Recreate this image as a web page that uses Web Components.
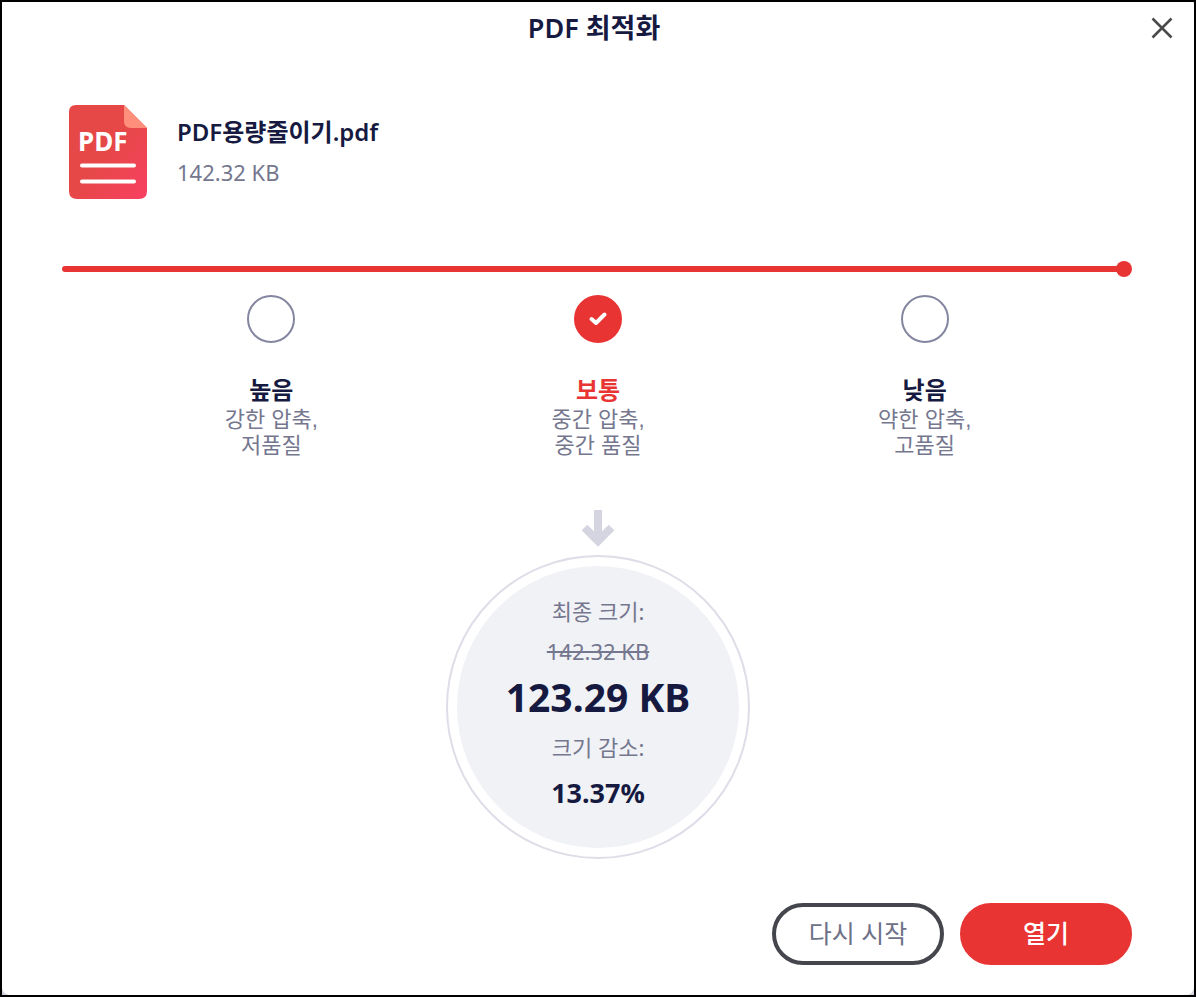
<!DOCTYPE html>
<html lang="ko">
  <head>
    <meta charset="UTF-8" />
    <meta name="viewport" content="width=device-width, initial-scale=1" />
    <title>PDF 최적화</title>
    <style>
      :root {
        --ink: #161a41;
        --muted: #75778f;
        --red: #e93434;
        --line: #dedde8;
      }
      body {
        margin: 0;
        color: var(--ink);
        font-family: "Noto Sans", "Noto Sans CJK KR", sans-serif;
      }
    </style>
  </head>
  <body>
    <optimize-dialog>
      <span slot="title">PDF 최적화</span>
      <file-summary>
        <span slot="name">PDF용량줄이기.pdf</span>
        <span slot="size">142.32 KB</span>
      </file-summary>
      <progress-track value="100"></progress-track>
      <level-picker></level-picker>
      <size-result>
        <span slot="before">142.32 KB</span>
        <span slot="after">123.29 KB</span>
        <span slot="saved">13.37%</span>
      </size-result>
      <pill-button slot="actions">다시 시작</pill-button>
      <pill-button slot="actions" primary>열기</pill-button>
    </optimize-dialog>

    <template id="optimize-dialog-template">
      <style>
        :host {
          display: flex;
          box-sizing: border-box;
          min-height: 100vh;
          border: 2px solid #000;
          background: #d4d4de;
        }
        .window {
          flex: 1;
          display: flex;
          flex-direction: column;
          background: #fff;
          border-radius: 0 2px 8px 8px;
        }
        header {
          display: grid;
          grid-template-columns: 56px 1fr 64px;
          align-items: center;
          height: 52px;
        }
        h1 {
          grid-column: 2;
          margin: 0;
          font-size: 27px;
          line-height: 32px;
          font-weight: 600;
          text-align: center;
        }
        .close {
          display: grid;
          place-items: center;
          height: 40px;
          padding: 0;
          border: 0;
          background: none;
        }
        main {
          padding: 50px 60px 0;
        }
        footer {
          display: flex;
          justify-content: flex-end;
          gap: 16px;
          margin-top: auto;
          padding: 32px 62px 30px;
        }
      </style>
      <div class="window">
        <header>
          <h1><slot name="title"></slot></h1>
          <button class="close" type="button" aria-label="닫기">
            <svg width="22" height="22" viewBox="0 0 22 22" fill="none" stroke="#4a4a4a" stroke-width="2.500">
              <path d="M1.500 1.500 20.500 20.500M20.500 1.500 1.500 20.500" />
            </svg>
          </button>
        </header>
        <main><slot></slot></main>
        <footer><slot name="actions"></slot></footer>
      </div>
    </template>

    <template id="file-summary-template">
      <style>
        :host {
          display: flex;
          align-items: center;
          gap: 29px;
          padding-left: 6px;
        }
        svg {
          display: block;
        }
        .badge {
          font-size: 26px;
          font-weight: 700;
        }
        .name,
        .size {
          line-height: 40px;
        }
        .name {
          font-size: 24px;
          font-weight: 600;
        }
        .size {
          font-size: 22px;
          color: var(--muted);
        }
      </style>
      <svg width="80" height="96" viewBox="0 0 80 96">
        <defs>
          <linearGradient id="sheet" x1="0" y1="0" x2="1" y2="1">
            <stop offset="0.500" stop-color="#e64848" />
            <stop offset="1" stop-color="#f93f62" />
          </linearGradient>
        </defs>
        <path d="M8 1H56L79 24V87Q79 95 71 95H9Q1 95 1 87V8Q1 1 8 1Z" fill="url(#sheet)" />
        <path d="M56 1 79 24H63Q56 24 56 17Z" fill="#ff8f7b" />
        <text class="badge" x="10" y="47" fill="#fff">PDF</text>
        <path d="M14 61.500H66M14 77.500H66" stroke="#fff" stroke-width="4" stroke-linecap="round" />
      </svg>
      <div>
        <div class="name"><slot name="name"></slot></div>
        <div class="size"><slot name="size"></slot></div>
      </div>
    </template>

    <template id="progress-track-template">
      <style>
        :host {
          display: flex;
          align-items: center;
          margin: 61px 2px 18px 0;
        }
        .bar {
          flex: 1;
          height: 6px;
          border-radius: 3px;
          background: var(--red);
        }
        .dot {
          width: 16px;
          height: 16px;
          margin-left: -8px;
          border-radius: 50%;
          background: var(--red);
        }
      </style>
      <div class="bar"></div>
      <div class="dot"></div>
    </template>

    <template id="level-picker-template">
      <style>
        :host {
          display: block;
          padding: 0 46px;
        }
        fieldset {
          display: grid;
          grid-template-columns: repeat(3, 1fr);
          margin: 0;
          padding: 0;
          border: 0;
        }
        label {
          display: flex;
          flex-direction: column;
          align-items: center;
          text-align: center;
        }
        .radio {
          display: grid;
          place-items: center;
          margin-bottom: 30px;
        }
        .radio > * {
          grid-area: 1 / 1;
        }
        input {
          appearance: none;
          box-sizing: border-box;
          width: 48px;
          height: 48px;
          margin: 0;
          border: 2px solid #8486a0;
          border-radius: 50%;
        }
        input:checked {
          border-color: var(--red);
          background: var(--red);
        }
        svg {
          display: none;
          pointer-events: none;
        }
        input:checked + svg {
          display: block;
        }
        strong {
          font-size: 24px;
          line-height: 34px;
          font-weight: 600;
        }
        label:has(input:checked) strong {
          color: var(--red);
        }
        .hint {
          font-family: "Liberation Sans", "Noto Sans CJK KR", sans-serif;
          font-size: 22px;
          line-height: 26px;
          color: var(--muted);
        }
      </style>
      <fieldset aria-label="압축 수준"></fieldset>
    </template>

    <template id="size-result-template">
      <style>
        :host {
          display: flex;
          flex-direction: column;
          align-items: center;
          gap: 8px;
          margin-top: 50px;
        }
        .ring {
          padding: 9px;
          border: 2px solid var(--line);
          border-radius: 50%;
        }
        .disc {
          display: flex;
          flex-direction: column;
          align-items: center;
          justify-content: center;
          box-sizing: border-box;
          width: 282px;
          height: 282px;
          padding-bottom: 4px;
          border-radius: 50%;
          background: #f1f2f6;
        }
        .caption,
        .before {
          font-size: 22px;
          line-height: 40px;
          color: var(--muted);
        }
        .after {
          margin-bottom: 4px;
          font-size: 39px;
          line-height: 52px;
          font-weight: 700;
        }
        .saved {
          font-size: 27px;
          line-height: 52px;
          font-weight: 700;
        }
      </style>
      <svg width="34" height="38" viewBox="0 0 34 38" fill="none" stroke="#d5d4e1" stroke-width="8">
        <path d="M17 1V30M3.500 18.500 17 32 30.500 18.500" />
      </svg>
      <div class="ring">
        <div class="disc">
          <div class="caption">최종 크기:</div>
          <s class="before"><slot name="before"></slot></s>
          <div class="after"><slot name="after"></slot></div>
          <div class="caption">크기 감소:</div>
          <div class="saved"><slot name="saved"></slot></div>
        </div>
      </div>
    </template>

    <template id="pill-button-template">
      <style>
        :host {
          display: block;
        }
        button {
          box-sizing: border-box;
          width: 172px;
          height: 62px;
          padding: 0 0 4px;
          border: 4px solid #45464d;
          border-radius: 31px;
          background: #fff;
          color: #6f7188;
          font-family: inherit;
          font-size: 25px;
          font-weight: 400;
        }
        :host([primary]) button {
          border-color: var(--red);
          background: var(--red);
          color: #fff;
          font-weight: 500;
        }
      </style>
      <button type="button"><slot></slot></button>
    </template>

    <script>
      const levels = [
        { id: "high", name: "높음", hint: ["강한 압축,", "저품질"] },
        { id: "medium", name: "보통", hint: ["중간 압축,", "중간 품질"], checked: true },
        { id: "low", name: "낮음", hint: ["약한 압축,", "고품질"] },
      ];

      class TemplateElement extends HTMLElement {
        constructor() {
          super();
          const template = document.getElementById(`${this.localName}-template`);
          const shadow = this.attachShadow({ mode: "open" });
          shadow.appendChild(template.content.cloneNode(true));
        }
      }

      class ProgressTrack extends TemplateElement {
        connectedCallback() {
          this.setAttribute("role", "progressbar");
          this.setAttribute("aria-valuenow", this.getAttribute("value"));
        }
      }

      // All radios share this shadow root so that they form one group
      class LevelPicker extends TemplateElement {
        connectedCallback() {
          this.shadowRoot.querySelector("fieldset").innerHTML = levels
            .map(
              (level) => `
              <label>
                <span class="radio">
                  <input type="radio" name="level" value="${level.id}" ${level.checked ? "checked" : ""} />
                  <svg width="20" height="16" viewBox="0 0 20 16" fill="none" stroke="#fff"
                    stroke-width="4" stroke-linecap="round" stroke-linejoin="round">
                    <path d="M3.500 8 8 12 16.500 3.500" />
                  </svg>
                </span>
                <strong>${level.name}</strong>
                <span class="hint">${level.hint.join("<br />")}</span>
              </label>`
            )
            .join("");
        }
      }

      customElements.define("optimize-dialog", class extends TemplateElement {});
      customElements.define("file-summary", class extends TemplateElement {});
      customElements.define("progress-track", ProgressTrack);
      customElements.define("level-picker", LevelPicker);
      customElements.define("size-result", class extends TemplateElement {});
      customElements.define("pill-button", class extends TemplateElement {});
    </script>
  </body>
</html>
